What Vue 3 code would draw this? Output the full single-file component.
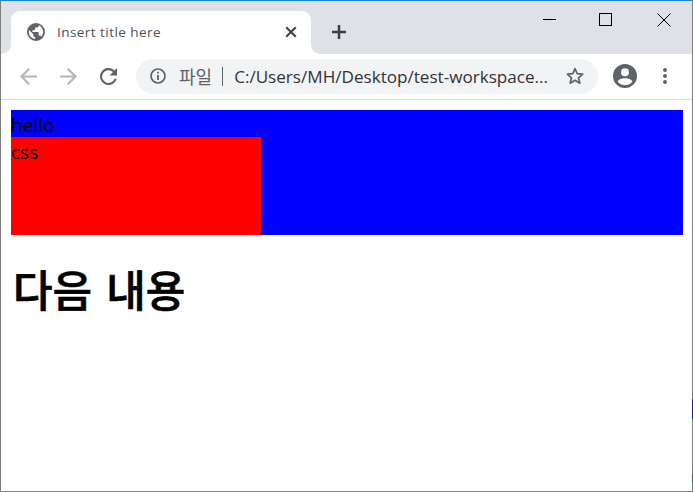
<script setup>
const pageTitle = 'Insert title here'
const address = 'C:/Users/MH/Desktop/test-workspace...'
</script>

<template>
  <div class="window">
    <div class="tabstrip">
      <div class="tab">
        <svg class="globe" viewBox="0 0 16 16" width="18" height="18">
          <path fill="#5f6368" d="M8 0a8 8 0 1 0 0 16A8 8 0 0 0 8 0zM1.6 8c0-.6.1-1.200.2-1.700L5.600 10v.8c0 .9.700 1.600 1.600 1.600v1.900A6.400 6.400 0 0 1 1.600 8zm11.100 4.300c-.2-.6-.8-1.100-1.500-1.100h-.8V8.800c0-.4-.4-.8-.8-.8H4.800V6.400h1.600c.4 0 .8-.4.800-.8V4h1.600c.9 0 1.600-.7 1.600-1.600v-.3a6.400 6.400 0 0 1 2.300 10.200z"/>
        </svg>
        <span class="tab-title">{{ pageTitle }}</span>
        <svg class="tab-close" viewBox="0 0 12 12" width="12" height="12">
          <path d="M1.200 1.200l9.600 9.600M10.800 1.200l-9.600 9.600" stroke="#3c4043" stroke-width="2" fill="none"/>
        </svg>
      </div>
      <svg class="new-tab" viewBox="0 0 14 14" width="14" height="14">
        <path d="M7 0v14M0 7h14" stroke="#3c4043" stroke-width="2.500" fill="none"/>
      </svg>
      <div class="controls">
        <svg class="min" viewBox="0 0 14 14" width="14" height="14"><path d="M0 6.500h13" stroke="#000" fill="none"/></svg>
        <svg viewBox="0 0 14 14" width="14" height="14"><rect x=".5" y=".5" width="12" height="12" stroke="#000" fill="none"/></svg>
        <svg viewBox="0 0 14 14" width="14" height="14"><path d="M.5.5l13 13M13.500.5l-13 13" stroke="#000" fill="none"/></svg>
      </div>
    </div>

    <div class="toolbar">
      <svg class="nav" viewBox="0 0 16 16" width="17" height="17">
        <path d="M16 7H3.800l5.600-5.600L8 0 0 8l8 8 1.400-1.400L3.800 9H16z" fill="#b4b6b8"/>
      </svg>
      <svg class="nav" viewBox="0 0 16 16" width="17" height="17">
        <path d="M0 7h12.200L6.600 1.400 8 0l8 8-8 8-1.400-1.400L12.200 9H0z" fill="#b4b6b8"/>
      </svg>
      <svg class="nav reload" viewBox="0 0 16 16" width="17" height="17">
        <path d="M13.650 2.350A8 8 0 1 0 15.750 10h-2.100a6 6 0 1 1-1.420-6.230L9 7h7V0z" fill="#5f6368"/>
      </svg>
      <div class="omnibox">
        <svg viewBox="0 0 16 16" width="16" height="16">
          <circle cx="8" cy="8" r="7" stroke="#5f6368" stroke-width="1.700" fill="none"/>
          <path d="M7.100 7h1.800v5H7.100zM7.100 3.800h1.800v1.800H7.100z" fill="#5f6368"/>
        </svg>
        <span class="scheme">파일</span>
        <span class="divider"></span>
        <span class="url">{{ address }}</span>
        <svg class="star" viewBox="0 0 20 20" width="20" height="20">
          <path d="M10 2.600l2.200 5.100 5.500.5-4.200 3.600 1.300 5.400L10 14.300l-4.800 2.900 1.300-5.400-4.200-3.600 5.500-.5z" stroke="#5f6368" stroke-width="1.700" fill="none" stroke-linejoin="round"/>
        </svg>
      </div>
      <svg class="avatar" viewBox="0 0 24 24" width="24" height="24">
        <path fill="#5f6368" d="M12 0a12 12 0 1 0 0 24 12 12 0 0 0 0-24zm0 4.200a4 4 0 1 1 0 8 4 4 0 0 1 0-8zm0 17a9.200 9.200 0 0 1-7.400-3.800c.9-2 4.500-3.200 7.400-3.200s6.500 1.200 7.400 3.200A9.200 9.200 0 0 1 12 21.200z"/>
      </svg>
      <div class="menu"><i></i><i></i><i></i></div>
    </div>

    <div class="page">
      <div class="blue">
        <div class="hello">hello</div>
        <div class="red">css</div>
      </div>
      <h1 class="next">다음 내용</h1>
    </div>

    <span class="edge-mark upper"></span>
    <span class="edge-mark lower"></span>
  </div>
</template>

<style>
html, body { margin: 0; background: #fff; }
</style>

<style scoped>
.window {
  position: relative;
  width: 693px;
  height: 492px;
  box-sizing: border-box;
  border: 1px solid #7f7f7f;
  border-top-color: #1a87d9;
  display: flex;
  flex-direction: column;
  font-family: "Open Sans", "Noto Sans CJK KR", sans-serif;
}
.edge-mark {
  position: absolute;
  right: -1px;
  width: 1px;
}
.edge-mark.upper { top: 398px; height: 20px; background: #20208a; }
.edge-mark.lower { top: 473px; height: 8px; background: #3a5a66; }
.tabstrip {
  height: 53px;
  flex: none;
  background: #dee1e6;
  display: flex;
  align-items: flex-start;
  box-sizing: border-box;
  padding: 10px 0 0 10px;
}
.tab {
  position: relative;
  width: 300px;
  height: 43px;
  box-sizing: border-box;
  background: #fff;
  border-radius: 9px 9px 0 0;
  display: flex;
  align-items: center;
  padding: 0 14px 1px 16px;
}
.tab::before,
.tab::after {
  content: "";
  position: absolute;
  bottom: 0;
  width: 9px;
  height: 9px;
}
.tab::before {
  left: -9px;
  background: radial-gradient(circle at 0 0, #dee1e6 8.500px, #fff 9px);
}
.tab::after {
  right: -9px;
  background: radial-gradient(circle at 100% 0, #dee1e6 8.500px, #fff 9px);
}
.tab-title {
  margin-left: 12px;
  font-size: 13.500px;
  letter-spacing: .45px;
  color: #4d5157;
  flex: 1;
}
.new-tab { margin: 14px 0 0 21px; }
.controls {
  margin-left: auto;
  margin-top: 2px;
  padding-right: 21px;
  display: flex;
  gap: 44px;
}
.controls .min { margin-right: -2px; }
.toolbar {
  height: 46px;
  flex: none;
  box-sizing: border-box;
  background: #fff;
  border-bottom: 1px solid #d8dadc;
  display: flex;
  align-items: center;
  padding: 0 0 1px 19px;
}
.nav { margin-right: 23px; flex: none; }
.nav.reload { margin-right: 19px; }
.omnibox {
  width: 462px;
  height: 35px;
  box-sizing: border-box;
  border-radius: 18px;
  background: #f1f3f4;
  display: flex;
  align-items: center;
  padding: 0 13px 0 14px;
}
.scheme {
  margin-left: 13px;
  font-size: 18px;
  color: #5f6368;
}
.divider {
  width: 1px;
  height: 19px;
  background: #5f6368;
  margin: 0 11px 0 10px;
}
.url {
  font-size: 17.100px;
  color: #30343a;
  flex: 1;
  white-space: nowrap;
}
.star { flex: none; }
.avatar { margin-left: 15px; flex: none; }
.menu {
  margin-left: 26px;
  display: flex;
  flex-direction: column;
  gap: 2px;
}
.menu i {
  display: block;
  width: 4px;
  height: 4px;
  border-radius: 50%;
  background: #5f6368;
}
.page {
  flex: 1;
  padding: 10px 9px 0 10px;
  background: #fff;
  color: #000;
}
.blue {
  height: 125px;
  background: #00f;
  font-size: 19px;
  line-height: 31px;
}
.hello { height: 27px; }
.red {
  width: 250px;
  height: 98px;
  background: #f00;
}
.next {
  margin: 28px 0 0;
  padding-left: 2px;
  font-size: 43px;
  line-height: 56px;
  font-weight: 500;
  -webkit-text-stroke: .7px #000;
  word-spacing: 3px;
}
</style>
